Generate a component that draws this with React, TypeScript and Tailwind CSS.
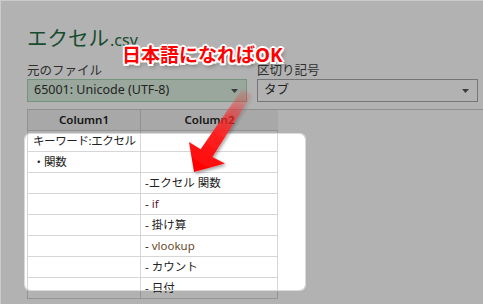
import React from 'react';

const jp = "font-['Noto_Sans','Noto_Sans_CJK_JP',sans-serif]";

function Caret() {
  return (
    <svg width="7" height="4" viewBox="0 0 7 4" className="shrink-0">
      <polygon points="0,0 7,0 3.5,4" fill="#555" />
    </svg>
  );
}

const rows: { c1: string; c2: React.ReactNode }[] = [
  { c1: 'キーワード:エクセル', c2: '' },
  { c1: '・関数', c2: '' },
  { c1: '', c2: '-エクセル 関数' },
  { c1: '', c2: <span>- <span className="text-[#5a2036]">if</span></span> },
  { c1: '', c2: <span>- 掛け算</span> },
  { c1: '', c2: <span>- <span className="text-[#6a4a2a]">vlookup</span></span> },
  { c1: '', c2: <span>- カウント</span> },
  { c1: '', c2: <span>- 日付</span> },
];

export default function App() {
  return (
    <div className="relative w-[483px] h-[304px] overflow-hidden bg-white border-t border-l border-[#cbcbcb]">
      {/* dialog body */}
      <div className={`pl-[26px] pt-[23px] ${jp} text-[#222]`}>
        <div className="flex items-baseline h-[28px] text-[#1f6e43]">
          <span className="text-[20.5px] leading-[28px]">エクセル</span>
          <span className="text-[16px] leading-[28px] ml-[1px]">.csv</span>
        </div>

        <div className="grid grid-cols-[220px_221px] gap-x-[10px] mt-[11px]">
          <div className="text-[12.5px] leading-[16px] text-[#444]">元のファイル</div>
          <div className="text-[12.5px] leading-[16px] text-[#444]">区切り記号</div>
          <div className="h-[23px] flex items-center justify-between px-[6px] pr-[8px] bg-[#dcefe0] border border-[#a7d3b2]">
            <span className="text-[12.5px] text-[#333]">65001: Unicode (UTF-8)</span>
            <Caret />
          </div>
          <div className="h-[23px] flex items-center justify-between px-[6px] pr-[8px] bg-white border border-[#aaa]">
            <span className="text-[12.5px] text-[#333]">タブ</span>
            <Caret />
          </div>
        </div>

        {/* preview grid */}
        <div className="mt-[7px] border-t border-[#cfcfcf]">
          <div className="grid grid-cols-[113px_138px]">
            {['Column1', 'Column2'].map((h) => (
              <div
                key={h}
                className="h-[21px] flex items-center justify-center bg-[#f1f1f1] border-l border-b border-[#d0d0d0] last:border-r text-[11.5px] font-semibold text-[#222]"
              >
                {h}
              </div>
            ))}
            {rows.map((r, i) => (
              <React.Fragment key={i}>
                <div className="h-[21px] flex items-center pl-[5px] border-l border-b border-[#d6d6d6] text-[11.5px] tracking-[-0.4px] whitespace-nowrap overflow-hidden">
                  {r.c1}
                </div>
                <div className="h-[21px] flex items-center pl-[4px] border-l border-r border-b border-[#d6d6d6] text-[11.5px] whitespace-pre">
                  {r.c2}
                </div>
              </React.Fragment>
            ))}
          </div>
        </div>
      </div>

      {/* spotlight: dims everything outside the highlighted rows */}
      <div className="absolute left-[24px] top-[133px] w-[280px] h-[156px] rounded-[5px] shadow-[0_0_0_1px_#dadada,0_0_0_2000px_rgba(0,0,0,0.3)] pointer-events-none" />

      {/* annotation arrow */}
      <svg className="absolute left-0 top-0 pointer-events-none" width="483" height="304" viewBox="-1 -1 483 304">
        <defs>
          <linearGradient id="arr" gradientUnits="userSpaceOnUse" x1="192" y1="170" x2="246" y2="86">
            <stop offset="0" stopColor="#ff0000" />
            <stop offset="0.45" stopColor="#ff1a1a" stopOpacity="0.95" />
            <stop offset="1" stopColor="#ff4040" stopOpacity="0.05" />
          </linearGradient>
          <filter id="sh" x="-20%" y="-20%" width="140%" height="140%">
            <feDropShadow dx="1.5" dy="2" stdDeviation="1.5" floodColor="#000" floodOpacity="0.35" />
          </filter>
        </defs>
        <polygon
          filter="url(#sh)"
          fill="url(#arr)"
          points="192,170 187,140 198.6,147.2 240.5,86.5 250,92.5 210.4,154.9 223,161.5"
        />
      </svg>

      {/* annotation label */}
      <div
        className={`absolute left-[121px] top-[43px] text-[19px] leading-[22px] font-bold text-[#ff0000] ${jp} [text-shadow:-1.5px_-1.5px_0_#fff,1.5px_-1.5px_0_#fff,-1.5px_1.5px_0_#fff,1.5px_1.5px_0_#fff,0_-2px_0_#fff,0_2px_0_#fff,-2px_0_0_#fff,2px_0_0_#fff,2px_3px_4px_rgba(0,0,0,0.45)]`}
      >
        日本語になればOK
      </div>
    </div>
  );
}
